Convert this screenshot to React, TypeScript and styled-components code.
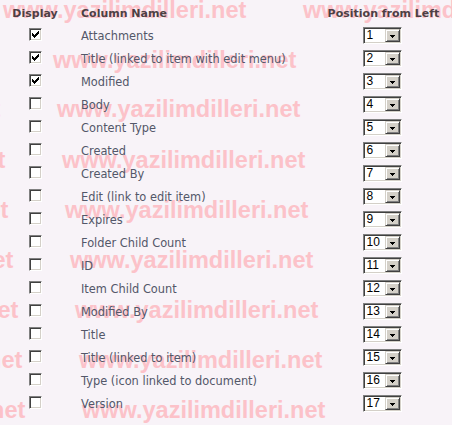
import React from 'react';
import styled, { createGlobalStyle } from 'styled-components';

const columns = [
	{ name: 'Attachments', checked: true },
	{ name: 'Title (linked to item with edit menu)', checked: true },
	{ name: 'Modified', checked: true },
	{ name: 'Body', checked: false },
	{ name: 'Content Type', checked: false },
	{ name: 'Created', checked: false },
	{ name: 'Created By', checked: false },
	{ name: 'Edit (link to edit item)', checked: false },
	{ name: 'Expires', checked: false },
	{ name: 'Folder Child Count', checked: false },
	{ name: 'ID', checked: false },
	{ name: 'Item Child Count', checked: false },
	{ name: 'Modified By', checked: false },
	{ name: 'Title', checked: false },
	{ name: 'Title (linked to item)', checked: false },
	{ name: 'Type (icon linked to document)', checked: false },
	{ name: 'Version', checked: false },
];

// watermark lines: top of line box, x positions where each copy starts
const watermarks = [
	{ top: -2, xs: [3, 303] },
	{ top: 48, xs: [53] },
	{ top: 97, xs: [-243, 57] },
	{ top: 148, xs: [-238, 62] },
	{ top: 198, xs: [-235, 65] },
	{ top: 248, xs: [-230, 70] },
	{ top: 298, xs: [-225, 75] },
	{ top: 348, xs: [-221, 79] },
	{ top: 398, xs: [-218, 82] },
];

const WM_TEXT = 'www.yazilimdilleri.net';

export default function App() {
	return (
		<>
			<GlobalStyle />
			<Page>
				<WatermarkLayer>
					{watermarks.map((w, i) =>
						w.xs.map((x) => (
							<Watermark key={`${i}-${x}`} $top={w.top} $left={x}>
								{WM_TEXT}
							</Watermark>
						))
					)}
				</WatermarkLayer>
				<Table>
					<HeaderRow>
						<HeaderCell>Display</HeaderCell>
						<HeaderCell $align="left">Column Name</HeaderCell>
						<HeaderCell>Position from Left</HeaderCell>
					</HeaderRow>
					{columns.map((c, i) => (
						<Row key={c.name}>
							<Cell>
								<CheckBox>{c.checked && <CheckMark />}</CheckBox>
							</Cell>
							<NameCell>{c.name}</NameCell>
							<Cell>
								<Select>
									<SelectValue>{i + 1}</SelectValue>
									<DropButton>
										<svg width="5" height="3" viewBox="0 0 5 3" shapeRendering="crispEdges">
											<path d="M0 0h5v1H0zM1 1h3v1H1zM2 2h1v1H2z" fill="#000" />
										</svg>
									</DropButton>
								</Select>
							</Cell>
						</Row>
					))}
				</Table>
			</Page>
		</>
	);
}

function CheckMark() {
	return (
		<svg width="7" height="7" viewBox="0 0 7 7" shapeRendering="crispEdges">
			<path
				d="M6 0h1v1H6zM5 1h2v1H5zM0 2h1v1H0zM4 2h3v1H4zM0 3h2v1H0zM3 3h3v1H3zM0 4h5v1H0zM1 5h3v1H1zM2 6h1v1H2z"
				fill="#000"
			/>
		</svg>
	);
}

const GlobalStyle = createGlobalStyle`
	html, body {
		margin: 0;
		padding: 0;
		background: #f8f3f8;
	}
`;

const Page = styled.div`
	position: relative;
	width: 452px;
	height: 425px;
	overflow: hidden;
	background: #f8f3f8;
	font-family: 'DejaVu Sans', Verdana, sans-serif;
`;

const WatermarkLayer = styled.div`
	position: absolute;
	inset: 0;
	z-index: 0;
	pointer-events: none;
`;

const Watermark = styled.span<{ $top: number; $left: number }>`
	position: absolute;
	top: ${(p) => p.$top}px;
	left: ${(p) => p.$left}px;
	white-space: nowrap;
	font-family: 'Liberation Sans', Arial, sans-serif;
	font-weight: bold;
	font-size: 23.5px;
	line-height: 24px;
	color: #fcc2c9;
`;

const Table = styled.div`
	position: relative;
	z-index: 1;
	padding: 2px 11px 0 12px;
	display: flex;
	flex-direction: column;
`;

const HeaderRow = styled.div`
	display: grid;
	grid-template-columns: 46px 1fr 115px;
	column-gap: 23px;
	height: 22px;
	align-items: center;
`;

const HeaderCell = styled.div<{ $align?: string }>`
	font-weight: bold;
	font-size: 11px;
	color: #4e3f44;
	white-space: nowrap;
	text-align: ${(p) => p.$align || 'center'};
`;

const Row = styled.div`
	display: grid;
	grid-template-columns: 46px 1fr 115px;
	column-gap: 23px;
	height: 23px;
	align-items: center;
`;

const Cell = styled.div`
	display: flex;
	justify-content: center;
	align-items: center;
`;

const NameCell = styled.div`
	font-size: 11.4px;
	color: #535769;
	white-space: nowrap;
`;

const CheckBox = styled.span`
	box-sizing: border-box;
	width: 13px;
	height: 13px;
	display: flex;
	align-items: center;
	justify-content: center;
	background: #fff;
	border-top: 1px solid #808080;
	border-left: 1px solid #808080;
	border-bottom: 1px solid #fff;
	border-right: 1px solid #fff;
	box-shadow: inset 1px 1px 0 #404040, inset -1px -1px 0 #d4d0c8;
	margin-top: -2px;
	svg {
		display: block;
	}
`;

const Select = styled.div`
	box-sizing: border-box;
	width: 39px;
	height: 17px;
	display: flex;
	align-items: stretch;
	background: #fff;
	border-top: 1px solid #808080;
	border-left: 1px solid #808080;
	border-bottom: 1px solid #fff;
	border-right: 1px solid #fff;
	box-shadow: inset 1px 1px 0 #404040, inset -1px -1px 0 #d4d0c8;
	padding: 1px;
	margin-left: -3px;
`;

const SelectValue = styled.span`
	flex: 1;
	padding-left: 2px;
	font-family: 'Liberation Sans', Arial, sans-serif;
	font-size: 12px;
	line-height: 13px;
	color: #000;
`;

const DropButton = styled.span`
	box-sizing: border-box;
	width: 15px;
	display: flex;
	align-items: center;
	justify-content: center;
	background: #d4d0c8;
	border-top: 1px solid #d4d0c8;
	border-left: 1px solid #d4d0c8;
	border-bottom: 1px solid #404040;
	border-right: 1px solid #404040;
	box-shadow: inset 1px 1px 0 #fff, inset -1px -1px 0 #808080;
	svg {
		display: block;
		margin-top: 1px;
	}
`;
